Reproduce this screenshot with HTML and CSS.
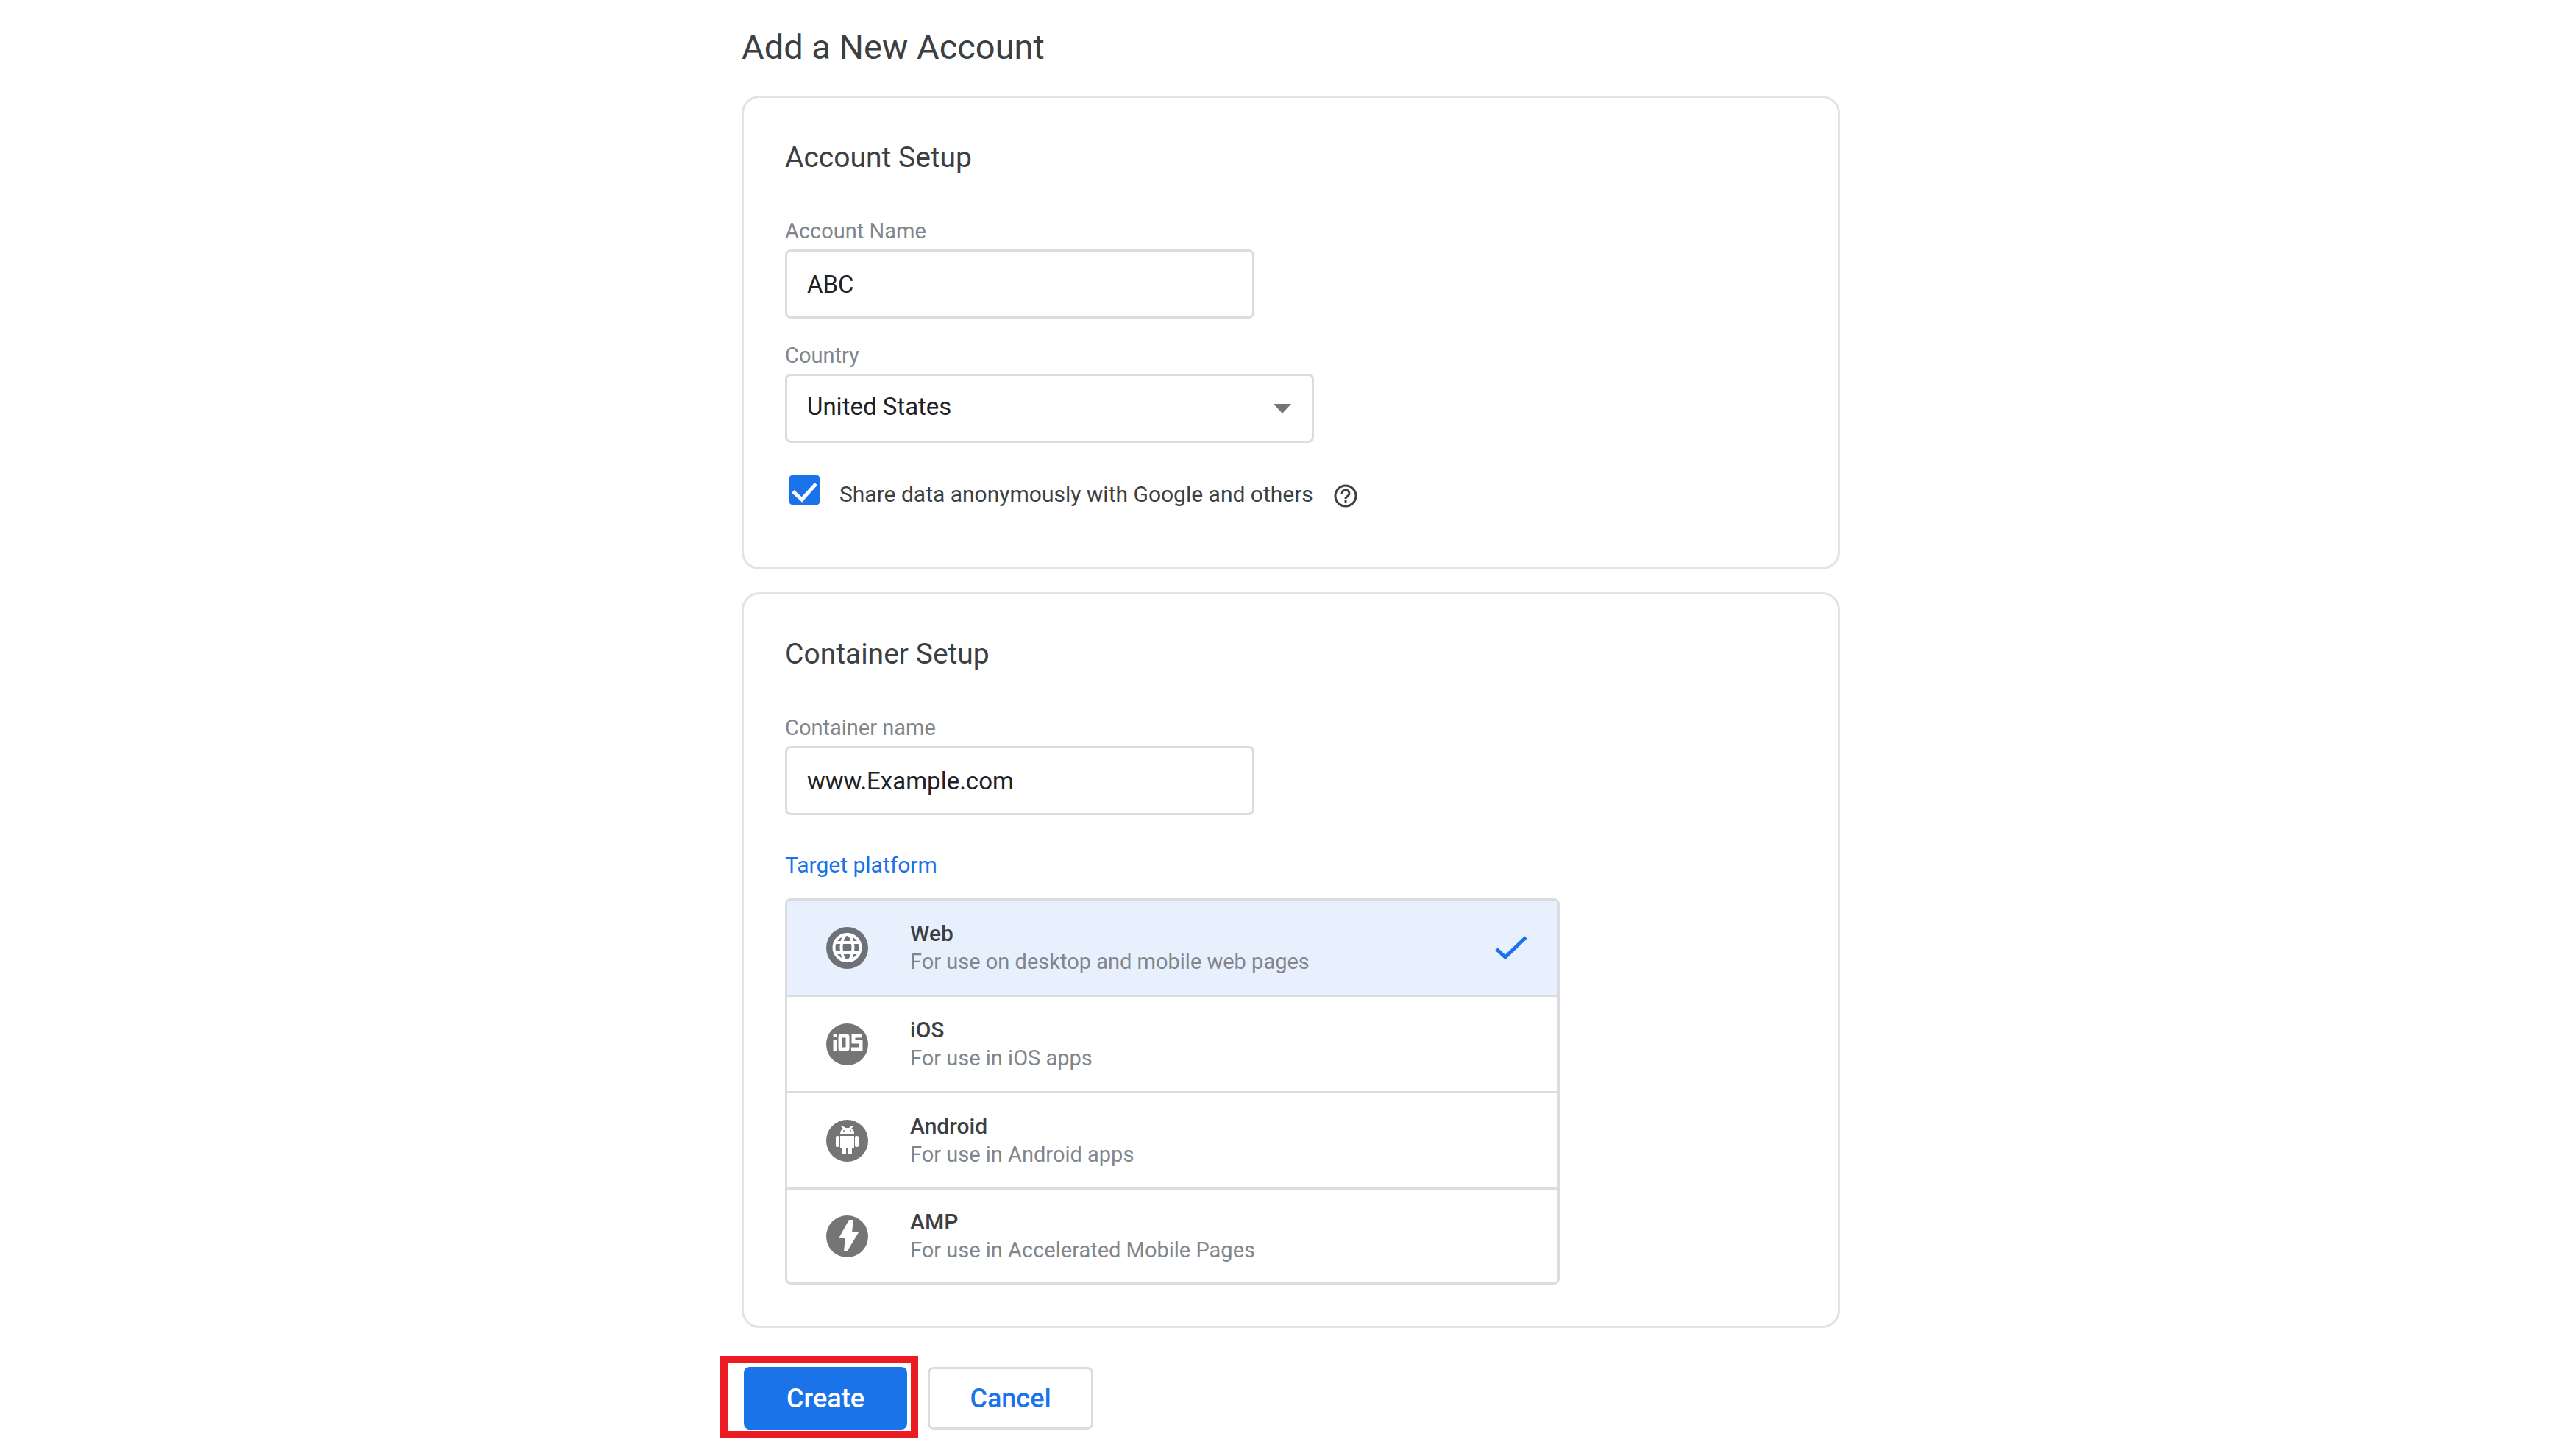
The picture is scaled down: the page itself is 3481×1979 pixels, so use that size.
FILE: index.html
```html
<!DOCTYPE html>
<html lang="en">
<head>
  <meta charset="UTF-8" />
  <meta name="viewport" content="width=device-width, initial-scale=1.0" />
  <title>Add a New Account</title>
  <link rel="stylesheet" href="styles.css">
</head>
<body>
  <main class="page">
    <h1>Add a New Account</h1>
    <form>
      <section class="card account">
        <h2>Account Setup</h2>
        <div class="field">
          <label for="accountName">Account Name</label>
          <input type="text" class="text-input" id="accountName" value="ABC" />
        </div>
        <div class="field">
          <label for="country">Country</label>
          <div class="select-wrap">
            <select id="country">
              <option selected>United States</option>
              <option>Canada</option>
              <option>United Kingdom</option>
            </select>
            <svg class="arrow" viewBox="0 0 24 13"><path d="M0 0h24L12 13z" fill="#757575"/></svg>
          </div>
        </div>
        <div class="share">
          <input type="checkbox" id="share" checked />
          <label for="share">Share data anonymously with Google and others</label>
          <svg class="help" viewBox="0 0 32 32" fill="none" stroke="#3c4043" stroke-width="3">
            <circle cx="16" cy="16" r="14"/>
            <path d="M11 13c0-3 2-5 5-5s5 2 5 5c0 3.500-5 3.500-5 7"/>
            <path d="M16 22v3"/>
          </svg>
        </div>
      </section>

      <section class="card">
        <h2>Container Setup</h2>
        <div class="field">
          <label for="containerName">Container name</label>
          <input type="text" class="text-input" id="containerName" value="www.Example.com" />
        </div>
        <div class="platform-title" id="platformTitle">Target platform</div>
        <div class="platforms" role="radiogroup" aria-labelledby="platformTitle">
          <label class="platform">
            <input type="radio" name="platform" value="web" checked />
            <svg class="icon" viewBox="0 0 57 57">
              <circle cx="28.500" cy="28.500" r="28.500" fill="#6d7278"/>
              <g fill="none" stroke="#fff" stroke-width="4">
                <circle cx="28.500" cy="28" r="18"/>
                <ellipse cx="28.500" cy="28" rx="8" ry="18"/>
                <path d="M12 21h33M12 35h33"/>
              </g>
            </svg>
            <span class="platform-text">
              <span class="name">Web</span>
              <span class="desc">For use on desktop and mobile web pages</span>
            </span>
            <svg class="check" viewBox="0 0 46 32"><path d="M3 18l12 11L43 2" fill="none" stroke="#1a73e8" stroke-width="5"/></svg>
          </label>
          <label class="platform">
            <input type="radio" name="platform" value="ios" />
            <svg class="icon" viewBox="0 0 57 57">
              <circle cx="28.500" cy="28.500" r="28.500" fill="#757575"/>
              <g fill="none" stroke="#fff" stroke-width="5">
                <path d="M12 15v4M12 22v15"/>
                <rect x="19" y="17" width="10" height="18" rx="1"/>
                <path d="M49 17H37v8h10v10H34"/>
              </g>
            </svg>
            <span class="platform-text">
              <span class="name">iOS</span>
              <span class="desc">For use in iOS apps</span>
            </span>
          </label>
          <label class="platform">
            <input type="radio" name="platform" value="android" />
            <svg class="icon" viewBox="0 0 57 57">
              <circle cx="28.500" cy="28.500" r="28.500" fill="#757575"/>
              <g fill="#fff">
                <path d="M19 19c0-4 2-6 4-7l-3-3 2-1 4 3h5l4-3 2 1-3 3c3 1 4 3 4 7z"/>
                <path d="M19 22h19v16h-3v9h-5v-9h-3v9h-5v-9h-3z"/>
                <rect x="13" y="22" width="5" height="15" rx="2"/>
                <rect x="39" y="22" width="5" height="15" rx="2"/>
              </g>
              <g fill="#757575"><circle cx="24" cy="15" r="1"/><circle cx="33" cy="15" r="1"/></g>
            </svg>
            <span class="platform-text">
              <span class="name">Android</span>
              <span class="desc">For use in Android apps</span>
            </span>
          </label>
          <label class="platform">
            <input type="radio" name="platform" value="amp" />
            <svg class="icon" viewBox="0 0 57 57">
              <circle cx="28.500" cy="28.500" r="28.500" fill="#757575"/>
              <path d="M31 6h6l-2 17h9L29 48h-5l2-17h-9z" fill="#fff"/>
            </svg>
            <span class="platform-text">
              <span class="name">AMP</span>
              <span class="desc">For use in Accelerated Mobile Pages</span>
            </span>
          </label>
        </div>
      </section>

      <div class="actions">
        <div class="highlight">
          <button type="submit" class="btn btn-create">Create</button>
        </div>
        <button type="button" class="btn btn-cancel">Cancel</button>
      </div>
    </form>
  </main>
</body>
</html>
```

FILE: styles.css
```css
* {
  box-sizing: border-box;
}
body {
  margin: 0;
  padding: 36px 0 24px 28px;
  background: #fff;
  font-family: Roboto, "Liberation Sans", sans-serif;
  font-size: 30px;
  line-height: 36px;
  color: #3c4043;
}
input, select, button {
  margin: 0;
  font-family: inherit;
}
.page {
  max-width: 1493px;
  margin: 0 auto;
}
h1 {
  margin: 0 0 38px;
  font-size: 47px;
  line-height: 56px;
  font-weight: 400;
}
h2 {
  margin: 0 0 58px;
  font-size: 39px;
  line-height: 48px;
  font-weight: 400;
}
.card {
  border: 3px solid #e2e3e6;
  border-radius: 24px;
  padding: 57px 56px 56px;
}
.account {
  padding-bottom: 81px;
  margin-bottom: 31px;
}
.field {
  margin-bottom: 32px;
}
.field label {
  display: block;
  margin-bottom: 7px;
  font-size: 29px;
  color: #80868b;
}
.text-input, select {
  display: block;
  height: 94px;
  padding: 0 27px;
  border: 3px solid #dadce0;
  border-radius: 8px;
  background: #fff;
  font-size: 33px;
  color: #202124;
}
.text-input {
  width: 638px;
  max-width: 100%;
}
.select-wrap {
  position: relative;
  width: 719px;
  max-width: 100%;
}
select {
  width: 100%;
  padding-bottom: 6px;
  appearance: none;
}
.arrow {
  position: absolute;
  right: 31px;
  top: 41px;
  width: 24px;
  height: 13px;
  pointer-events: none;
}
.share {
  display: flex;
  align-items: flex-start;
  margin-top: 44px;
  padding-left: 6px;
}
.share label {
  margin: 8px 28px 0 27px;
}
.share input {
  appearance: none;
  display: flex;
  justify-content: center;
  width: 41px;
  height: 40px;
  border-radius: 4px;
  border: 3px solid #757575;
}
.share input:checked {
  border: none;
  background: #1a73e8;
}
.share input:checked::after {
  content: "";
  width: 14px;
  height: 26px;
  margin-top: 3px;
  border: solid #fff;
  border-width: 0 5px 5px 0;
  transform: rotate(42deg);
}
.help {
  width: 32px;
  height: 32px;
  margin-top: 12px;
}
.platform-title {
  margin: 50px 0 27px;
  color: #1a73e8;
}
.platforms {
  max-width: 1053px;
  border: 3px solid #dadce0;
  border-radius: 8px;
  overflow: hidden;
}
.platform {
  display: flex;
  align-items: center;
  position: relative;
  height: 131px;
  padding: 0 40px 0 53px;
  border-bottom: 3px solid #dadce0;
}
.platform:last-child {
  height: 126px;
  border-bottom: none;
}
.platform input {
  position: absolute;
  opacity: 0;
}
.platform:has(input:checked) {
  background: #e8f0fe;
}
.icon {
  width: 57px;
  height: 57px;
}
.platform-text {
  flex: 1;
  margin-left: 57px;
}
.name, .desc {
  display: block;
  line-height: 38px;
}
.name {
  font-weight: 500;
}
.desc {
  font-size: 29px;
  color: #80868b;
}
.check {
  width: 46px;
  height: 32px;
}
.actions {
  display: flex;
  gap: 28px;
  margin-top: 53px;
  padding-left: 3px;
}
.btn {
  display: block;
  height: 85px;
  border-radius: 8px;
  font-size: 36px;
  font-weight: 500;
}
.btn-create {
  width: 222px;
  border: none;
  background: #1a73e8;
  color: #fff;
}
.btn-cancel {
  width: 225px;
  border: 3px solid #dadce0;
  background: #fff;
  color: #1a73e8;
}
/* red marker around the Create button */
.highlight {
  position: relative;
}
.highlight::before {
  content: "";
  position: absolute;
  inset: -15px -15px -12px -32px;
  border: 10px solid #ed1c24;
  pointer-events: none;
}
```
